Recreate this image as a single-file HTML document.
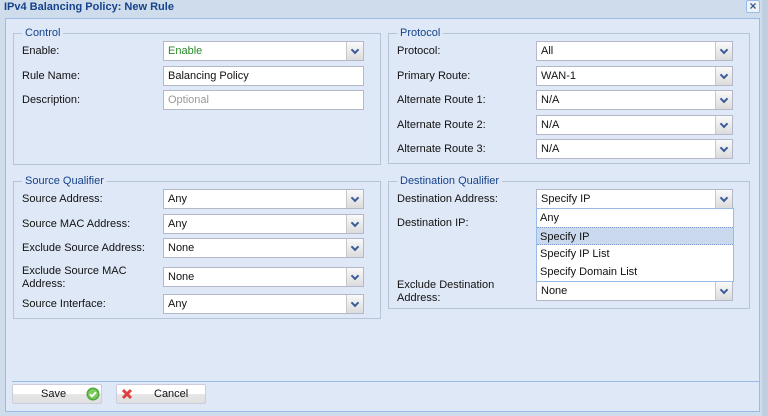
<!DOCTYPE html>
<html><head><style>
*{box-sizing:border-box;margin:0;padding:0}
body{width:768px;height:416px;overflow:hidden;background:#cfdcec;font-family:"Liberation Sans",sans-serif;font-size:11px;color:#111;position:relative}
.title{position:absolute;left:4px;top:1px;font-weight:bold;font-size:11px;color:#15428b}
.close{position:absolute;left:746px;top:0;width:14px;height:13px;border:1px solid #99bbe8;background:#eef3fa;border-radius:2px;color:#3a5a8a;font-size:12px;line-height:11px;text-align:center;font-weight:bold}
.body{position:absolute;left:5px;top:18px;width:755px;height:394px;background:#dfe8f6;border:1px solid #99bbe8}
.right{position:absolute;left:762px;top:0;width:6px;height:416px;background:#c0cfe2}
fieldset{position:absolute;border:1px solid #b5c4d6}
legend{color:#15428b;font-size:11px;padding:0 3px;margin-left:8px}
.lbl{position:absolute;font-size:11px;line-height:13px}
.in{position:absolute;height:20px;background:#fff;border:1px solid #b5b8c8;padding:3px 4px;font-size:11px;line-height:13px}
.sel::after{content:"";position:absolute;right:0;top:0;width:16px;height:18px;background:linear-gradient(#fafafa,#dcdcdc);border-left:1px solid #c8c8c8}
.sel::before{content:"";position:absolute;right:5px;top:5px;width:4px;height:4px;border-right:2px solid #3a5a9a;border-bottom:2px solid #3a5a9a;transform:rotate(45deg);z-index:2}
.dd{position:absolute;left:536px;top:208px;width:198px;height:74px;background:#fff;border:1px solid #99bbe8}
.dd div{height:18px;padding:2px 3px;line-height:14px}
.dd .on{background:#cbd9ef;border-top:1px dotted #7a9ad0;border-bottom:1px dotted #7a9ad0}
.foot{position:absolute;left:12px;top:381px;width:748px;border-top:1px solid #99bbe8}
.btn{position:absolute;top:384px;width:90px;height:20px;border:1px solid #ccd;border-radius:2px;background:linear-gradient(#fff,#fff 50%,#e6e6e6 50%,#e0e0e0);font-size:11px;line-height:18px}
</style></head><body>
<div class="right"></div>
<div class="title">IPv4 Balancing Policy: New Rule</div>
<div class="close">×</div>
<div class="body"></div>

<fieldset style="left:13px;top:27px;width:368px;height:138px"><legend>Control</legend></fieldset>
<fieldset style="left:388px;top:27px;width:362px;height:137px"><legend>Protocol</legend></fieldset>
<fieldset style="left:13px;top:175px;width:368px;height:144px"><legend>Source Qualifier</legend></fieldset>
<fieldset style="left:388px;top:175px;width:362px;height:134px"><legend>Destination Qualifier</legend></fieldset>

<div class="lbl" style="left:22px;top:45px">Enable:</div>
<div class="in sel" style="left:163px;top:41px;width:201px;color:#2a8a2a">Enable</div>
<div class="lbl" style="left:22px;top:70px">Rule Name:</div>
<div class="in" style="left:163px;top:66px;width:201px">Balancing Policy</div>
<div class="lbl" style="left:22px;top:94px">Description:</div>
<div class="in" style="left:163px;top:90px;width:201px;color:#999">Optional</div>

<div class="lbl" style="left:397px;top:45px">Protocol:</div>
<div class="in sel" style="left:536px;top:41px;width:197px">All</div>
<div class="lbl" style="left:397px;top:70px">Primary Route:</div>
<div class="in sel" style="left:536px;top:66px;width:197px">WAN-1</div>
<div class="lbl" style="left:397px;top:94px">Alternate Route 1:</div>
<div class="in sel" style="left:536px;top:90px;width:197px">N/A</div>
<div class="lbl" style="left:397px;top:119px">Alternate Route 2:</div>
<div class="in sel" style="left:536px;top:115px;width:197px">N/A</div>
<div class="lbl" style="left:397px;top:143px">Alternate Route 3:</div>
<div class="in sel" style="left:536px;top:139px;width:197px">N/A</div>

<div class="lbl" style="left:22px;top:193px">Source Address:</div>
<div class="in sel" style="left:163px;top:189px;width:201px">Any</div>
<div class="lbl" style="left:22px;top:218px">Source MAC Address:</div>
<div class="in sel" style="left:163px;top:214px;width:201px">Any</div>
<div class="lbl" style="left:22px;top:242px">Exclude Source Address:</div>
<div class="in sel" style="left:163px;top:238px;width:201px">None</div>
<div class="lbl" style="left:22px;top:265px">Exclude Source MAC<br>Address:</div>
<div class="in sel" style="left:163px;top:267px;width:201px">None</div>
<div class="lbl" style="left:22px;top:298px">Source Interface:</div>
<div class="in sel" style="left:163px;top:294px;width:201px">Any</div>

<div class="lbl" style="left:397px;top:193px">Destination Address:</div>
<div class="in sel" style="left:536px;top:189px;width:197px">Specify IP</div>
<div class="lbl" style="left:397px;top:217px">Destination IP:</div>
<div class="lbl" style="left:397px;top:279px">Exclude Destination<br>Address:</div>
<div class="in sel" style="left:536px;top:281px;width:197px">None</div>
<div class="dd"><div>Any</div><div class="on">Specify IP</div><div>Specify IP List</div><div>Specify Domain List</div></div>

<div class="foot"></div>
<div class="btn" style="left:12px"><span style="position:absolute;left:28px">Save</span>
<svg style="position:absolute;left:73px;top:2px" width="14" height="14" viewBox="0 0 14 14"><circle cx="7" cy="7" r="6.5" fill="#4ea83e"/><circle cx="7" cy="7" r="5" fill="#7dcc5f"/><path d="M4 7.2l2 2 4-4" stroke="#fff" stroke-width="1.8" fill="none"/></svg></div>
<div class="btn" style="left:116px"><svg style="position:absolute;left:4px;top:3px" width="12" height="12" viewBox="0 0 12 12"><path d="M2 2l8 8M10 2l-8 8" stroke="#e04040" stroke-width="3"/></svg><span style="position:absolute;left:37px">Cancel</span></div>
</body></html>
